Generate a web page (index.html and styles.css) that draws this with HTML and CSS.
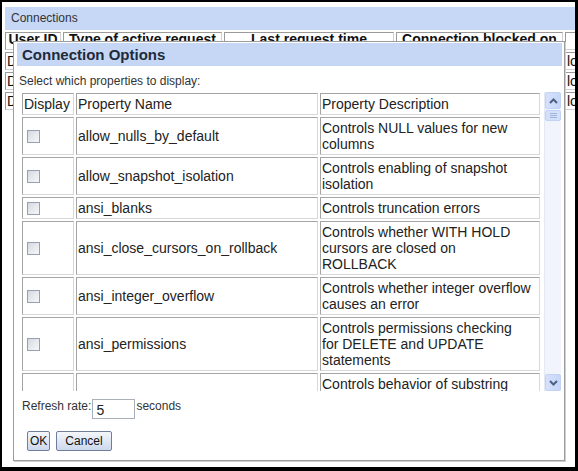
FILE: index.html
```html
<!DOCTYPE html>
<html lang="en">
<head>
    <meta charset="UTF-8">
    <title>Connections</title>
    <link rel="stylesheet" href="styles.css">
</head>
<body>
    <div class="frame">
        <div class="panel-bar">Connections</div>
        <table class="conn-table">
            <tr>
                <th class="c-user">User ID</th>
                <th class="c-type">Type of active request</th>
                <th class="c-time">Last request time</th>
                <th class="c-block">Connection blocked on</th>
                <th class="c-node">Client node</th>
            </tr>
            <tr><td>DBA</td><td>Fetch</td><td>2009-03-12 10:41</td><td></td><td>localhost</td></tr>
            <tr><td>DBA</td><td>Idle</td><td>2009-03-12 10:40</td><td></td><td>localhost</td></tr>
            <tr><td>DBA</td><td>Idle</td><td>2009-03-12 10:38</td><td></td><td>localhost</td></tr>
        </table>

        <!-- options dialog, opened over the connections list -->
        <div class="dialog">
            <div class="dialog-title">Connection Options</div>
            <div class="dialog-hint">Select which properties to display:</div>
            <div class="props">
                <div class="props-view">
                    <table class="props-table">
                        <tr>
                            <th class="col-display">Display</th>
                            <th class="col-name">Property Name</th>
                            <th class="col-desc">Property Description</th>
                        </tr>
                        <tr>
                            <td><input type="checkbox" class="check"></td>
                            <td>allow_nulls_by_default</td>
                            <td>Controls NULL values for new columns</td>
                        </tr>
                        <tr>
                            <td><input type="checkbox" class="check"></td>
                            <td>allow_snapshot_isolation</td>
                            <td>Controls enabling of snapshot isolation</td>
                        </tr>
                        <tr>
                            <td><input type="checkbox" class="check"></td>
                            <td>ansi_blanks</td>
                            <td>Controls truncation errors</td>
                        </tr>
                        <tr>
                            <td><input type="checkbox" class="check"></td>
                            <td>ansi_close_cursors_on_rollback</td>
                            <td>Controls whether WITH HOLD cursors are closed on ROLLBACK</td>
                        </tr>
                        <tr>
                            <td><input type="checkbox" class="check"></td>
                            <td>ansi_integer_overflow</td>
                            <td>Controls whether integer overflow causes an error</td>
                        </tr>
                        <tr>
                            <td><input type="checkbox" class="check"></td>
                            <td>ansi_permissions</td>
                            <td>Controls permissions checking for DELETE and UPDATE statements</td>
                        </tr>
                        <tr>
                            <td><input type="checkbox" class="check"></td>
                            <td>ansi_substring</td>
                            <td>Controls behavior of substring function with negative start or length</td>
                        </tr>
                        <tr>
                            <td><input type="checkbox" class="check"></td>
                            <td>ansi_update_constraints</td>
                            <td>Controls the range of updates that are permitted</td>
                        </tr>
                    </table>
                </div>
                <div class="vscroll">
                    <div class="vscroll-btn">
                        <svg width="9" height="6" viewBox="0 0 9 6"><polyline points="1,5 4.5,1.5 8,5" fill="none" stroke="#4d6185" stroke-width="2"/></svg>
                    </div>
                    <div class="vscroll-thumb">
                        <span></span><span></span><span></span>
                    </div>
                    <div class="vscroll-track"></div>
                    <div class="vscroll-btn">
                        <svg width="9" height="6" viewBox="0 0 9 6"><polyline points="1,1 4.5,4.5 8,1" fill="none" stroke="#4d6185" stroke-width="2"/></svg>
                    </div>
                </div>
            </div>
            <div class="refresh">
                <span>Refresh rate:</span>
                <input type="text" class="rate" value="5">
                <span class="unit">seconds</span>
            </div>
            <div class="actions">
                <button class="btn btn-ok">OK</button>
                <button class="btn btn-cancel">Cancel</button>
            </div>
        </div>
    </div>
</body>
</html>
```

FILE: styles.css
```css
body, html {
    margin: 0;
    padding: 0;
    background-color: #fff;
    font-family: "Liberation Sans", Arial, sans-serif;
}
.frame {
    position: relative;
    box-sizing: border-box;
    width: 578px;
    height: 471px;
    overflow: hidden;
    border-style: solid;
    border-color: #000;
    border-width: 2px 3px 4px 2px;
    padding: 5px 0 0 3px;
    background-color: #fff;
}
.panel-bar {
    height: 23px;
    line-height: 23px;
    padding-left: 6px;
    font-size: 12px;
    color: #333;
    background-color: #c7d7f6;
}

/* connections list behind the dialog */
.conn-table {
    border-collapse: separate;
    border-spacing: 2px;
    margin-left: -2px;
    table-layout: fixed;
    width: 660px;
    font-size: 14px;
    line-height: 16px;
    color: #111;
}
.conn-table th, .conn-table td {
    box-sizing: border-box;
    padding: 0 1px;
    border: 1px solid;
    border-color: #9a9a9a #d0d0d0 #d0d0d0 #9a9a9a;
    white-space: nowrap;
    overflow: hidden;
}
.conn-table th {
    font-weight: bold;
    text-align: center;
    vertical-align: top;
    line-height: 12px;
    padding-bottom: 4px;
}
.c-user { width: 56px; }
.c-type { width: 159px; }
.c-time { width: 170px; }
.c-block { width: 167px; }
.c-node { width: 100px; }

/* dialog */
.dialog {
    position: absolute;
    left: 11px;
    top: 39px;
    box-sizing: border-box;
    width: 552px;
    height: 420px;
    padding: 1px 2px 0 3px;
    background-color: #fff;
    border: 1px solid #9c9c9c;
    box-shadow: 1px 1px 0 #cfcfcf;
}
.dialog-title {
    height: 23px;
    line-height: 23px;
    padding-left: 5px;
    font-size: 15px;
    font-weight: bold;
    color: #1f2a3a;
    background-color: #c6d7f6;
}
.dialog-hint {
    margin-top: 7px;
    padding-left: 2px;
    font-size: 12px;
    line-height: 16px;
    color: #333;
}
.props {
    display: flex;
    gap: 2px;
    margin: 2px 0 0 3px;
    height: 300px;
}
.props-view {
    width: 522px;
    overflow: hidden;
}
.props-table {
    border-collapse: separate;
    border-spacing: 2px;
    table-layout: fixed;
    width: 522px;
    font-size: 14px;
    line-height: 16px;
    color: #222;
}
.props-table th, .props-table td {
    box-sizing: border-box;
    padding: 2px 1px;
    border: 1px solid;
    border-color: #a4a4a4 #d8d8d8 #d8d8d8 #a4a4a4;
    vertical-align: middle;
}
.props-table th {
    font-weight: normal;
    text-align: left;
}
.col-display { width: 52px; }
.col-name { width: 242px; }
.col-desc { width: 220px; }
.props-table td:last-child, .props-table th:last-child {
    padding-right: 8px;
}
.check {
    appearance: none;
    display: block;
    width: 13px;
    height: 13px;
    margin: 0 0 0 3px;
    border: 1px solid #95a0b2;
    background: linear-gradient(135deg, #d6dae1, #f7f7f8);
    box-sizing: border-box;
}

/* drawn scrollbar */
.vscroll {
    display: flex;
    flex-direction: column;
    width: 17px;
    margin-top: 1px;
    height: 299px;
    background-color: #f1f4fb;
    border-left: 1px solid #e4e9f4;
    box-sizing: border-box;
}
.vscroll-btn {
    height: 15px;
    display: flex;
    align-items: center;
    justify-content: center;
    border: 1px solid #c3d2f4;
    border-radius: 2px;
    background: linear-gradient(90deg, #d6e2fb, #c5d6f8);
}
.vscroll-thumb {
    height: 9px;
    margin-top: 1px;
    display: flex;
    flex-direction: column;
    align-items: center;
    justify-content: center;
    gap: 1px;
    border: 1px solid #c3d2f4;
    border-radius: 2px;
    background: #d3e0fa;
}
.vscroll-thumb span {
    width: 7px;
    height: 1px;
    background-color: #9fb3dc;
}
.vscroll-track {
    flex: 1;
}

.refresh {
    display: flex;
    align-items: flex-start;
    margin: 7px 0 0 5px;
    font-size: 12px;
    line-height: 16px;
    color: #333;
}
.rate {
    box-sizing: border-box;
    width: 43px;
    height: 20px;
    margin: 1px 1px 0 1px;
    padding: 2px 0 0 3px;
    border: 1px solid #a9b0ba;
    font-family: "Liberation Sans", Arial, sans-serif;
    font-size: 14px;
    line-height: 16px;
    color: #222;
}
.actions {
    display: flex;
    gap: 6px;
    margin: 12px 0 0 10px;
}
.btn {
    height: 20px;
    padding: 0 2px;
    font-family: "Liberation Sans", Arial, sans-serif;
    font-size: 12px;
    color: #111;
    border: 1px solid #6f7f99;
    border-radius: 2px;
    background: linear-gradient(#f4f6fa, #ccd8ec);
}
.btn-cancel {
    padding: 0 8px;
}
```
